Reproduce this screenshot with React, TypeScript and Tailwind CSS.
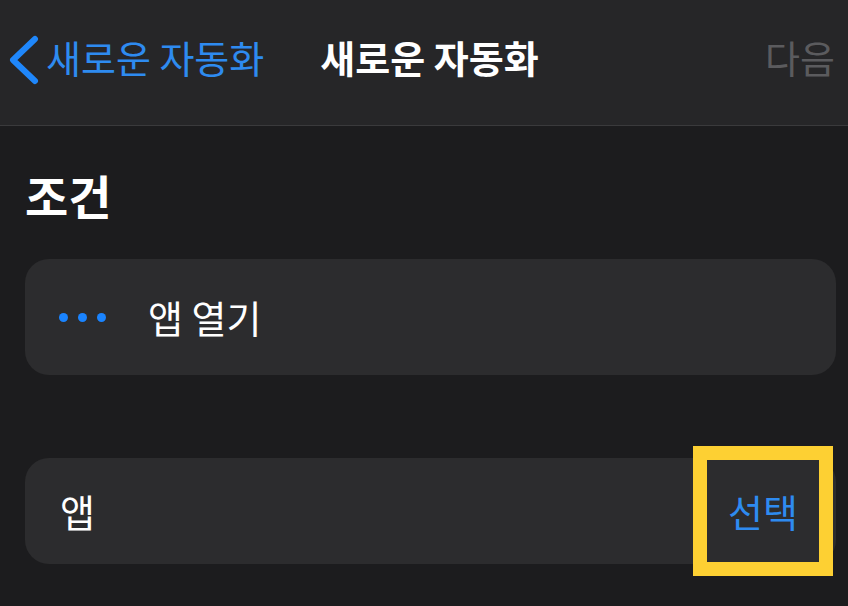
import React from "react";

export default function App() {
  const font = { fontFamily: '"Noto Sans CJK KR", "Noto Sans", sans-serif' };
  return (
    <div className="w-[848px] h-[606px] bg-[#1c1c1e] overflow-hidden" style={font}>
      <div className="h-[126px] bg-[#262628] border-b border-[#3a3a3c] flex items-center pb-[12px]">
        <div className="flex items-center pl-[8px]">
          <svg width="32" height="50" viewBox="0 0 32 50" className="shrink-0 mt-[6px]">
            <path d="M27 4 L5 25 L27 46" fill="none" stroke="#1f87fb" strokeWidth="6" strokeLinecap="round" strokeLinejoin="round" />
          </svg>
          <span className="ml-[6px] text-[38px] leading-none text-[#2e8bf0]">새로운 자동화</span>
        </div>
        <span className="ml-[56px] text-[38px] leading-none font-semibold text-white">새로운 자동화</span>
        <span className="ml-auto mr-[13px] text-[38px] leading-none text-[#5b5b5e]">다음</span>
      </div>
      <div className="pl-[25px] pr-[12px]">
        <div className="mt-[45px] text-[47px] leading-none font-bold text-white">조건</div>
        <div className="mt-[41px] h-[116px] rounded-[24px] bg-[#2c2c2e] flex items-center">
          <div className="flex items-center gap-[10px] pl-[34px]">
            <span className="w-[9px] h-[9px] rounded-full bg-[#1a84ff]" />
            <span className="w-[9px] h-[9px] rounded-full bg-[#1a84ff]" />
            <span className="w-[9px] h-[9px] rounded-full bg-[#1a84ff]" />
          </div>
          <span className="ml-[42px] text-[38px] leading-none text-white">앱 열기</span>
        </div>
        <div className="relative mt-[83px] h-[106px] rounded-[24px] bg-[#2c2c2e] flex items-center">
          <span className="pl-[35px] text-[38px] leading-none text-white">앱</span>
          <div className="absolute right-[3px] top-[-12px] w-[140px] h-[130px] border-[14px] border-[#fdd033] flex items-center justify-center">
            <span className="text-[38px] leading-none text-[#2e8bf0]">선택</span>
          </div>
        </div>
      </div>
    </div>
  );
}
